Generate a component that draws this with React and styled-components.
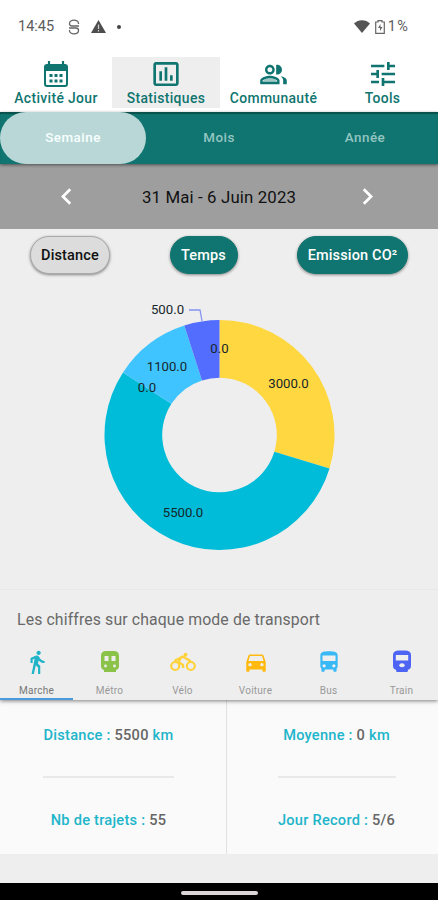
import React from "react";
import styled, { createGlobalStyle } from "styled-components";
import {
  MdInsertChartOutlined,
  MdTune,
  MdDirectionsWalk,
  MdDirectionsCar,
  MdDirectionsBus,
  MdChevronLeft,
  MdChevronRight,
} from "react-icons/md";

const GlobalStyle = createGlobalStyle`
  * { box-sizing: border-box; }
  body { margin: 0; background: #eeeeee; font-family: Roboto, sans-serif; }
  svg { display: block; }
`;

const Screen = styled.main`
  width: 438px;
  height: 900px;
  display: flex;
  flex-direction: column;
  overflow: hidden;
  background: #eeeeee;
`;

const StatusBar = styled.header`
  height: 57px;
  flex: none;
  padding: 0 30px 4px 18px;
  display: flex;
  align-items: center;
  justify-content: space-between;
  background: #fff;
  color: #5c5c5c;
  font-size: 14.5px;
`;

const StatusGroup = styled.div`
  display: flex;
  align-items: center;
  gap: ${(p) => p.$gap}px;
`;

const Clock = styled.span`
  width: 36px;
  white-space: nowrap;
  margin-right: 3px;
`;

const Battery = styled.span`
  letter-spacing: 1.2px;
  margin-left: -2px;
  margin-right: -1px;
`;

const Nav = styled.nav`
  height: 55px;
  flex: none;
  display: grid;
  grid-template-columns: 112px 108px 107px 111px;
  padding-bottom: 4px;
  background: #fff;
`;

const NavItem = styled.button`
  border: 0;
  padding: 1px 0 0;
  display: flex;
  flex-direction: column;
  align-items: center;
  background: ${(p) => (p.$active ? "#eeeeee" : "#fff")};
  color: #107570;
  font: 500 13.9px/16px Roboto, sans-serif;
  letter-spacing: 0.35px;
  white-space: nowrap;
`;

const NavIcon = styled.span`
  height: 32px;
  display: flex;
  align-items: center;
`;

const PeriodTabs = styled.div`
  height: 52px;
  flex: none;
  display: grid;
  grid-template-columns: repeat(3, 1fr);
  background: #107570;
  box-shadow: inset 0 2px 1px #0a504b, 0 1px 3px rgba(0, 0, 0, 0.5);
  z-index: 1;
`;

const PeriodTab = styled.button`
  border: 0;
  padding: 0 0 2px;
  border-radius: 26px;
  background: ${(p) => (p.$active ? "#b8d7d6" : "transparent")};
  color: ${(p) => (p.$active ? "#f8ffff" : "#94c5c2")};
  font: 500 13.4px Roboto, sans-serif;
  letter-spacing: 0.5px;
`;

const DateBar = styled.div`
  height: 65px;
  flex: none;
  display: grid;
  grid-template-columns: 132px 174px 122px;
  align-items: center;
  justify-items: center;
  background: #9e9e9e;
  color: #111;
  font-size: 16.8px;
  letter-spacing: 0.15px;
`;

const ArrowButton = styled.button`
  border: 0;
  padding: 0;
  background: none;
  color: #fff;
`;

const Filters = styled.div`
  height: 53px;
  flex: none;
  display: flex;
  align-items: center;
  justify-content: space-between;
  padding: 0 30px 2px;
`;

const FilterChip = styled.button`
  width: ${(p) => p.$width}px;
  height: 38px;
  padding: 2px 0 0;
  border: 1px solid ${(p) => (p.$selected ? "#aaa" : "#107570")};
  border-radius: 19px;
  background: ${(p) => (p.$selected ? "#dcdcdc" : "#107570")};
  color: ${(p) => (p.$selected ? "#111" : "#fff")};
  font: 500 14.5px Roboto, sans-serif;
  letter-spacing: 0.15px;
  white-space: nowrap;
  box-shadow: 0 1px 3px rgba(0, 0, 0, 0.45);
`;

const ChartArea = styled.section`
  height: 307px;
  flex: none;
`;

const ChartText = styled.text`
  font: 13.2px Roboto, sans-serif;
  fill: #16272b;
  text-anchor: middle;
`;

const Modes = styled.section`
  height: 111px;
  flex: none;
  display: flex;
  flex-direction: column;
  border-top: 1px solid #e7e7e7;
  box-shadow: 0 1px 4px rgba(0, 0, 0, 0.5);
  clip-path: inset(0 0 -8px 0);
  background: #eeeeee;
  z-index: 1;
`;

const ModesTitle = styled.h2`
  margin: 0;
  height: 56px;
  padding: 20px 17px 0;
  color: #696969;
  font: 400 15.8px/20px Roboto, sans-serif;
  letter-spacing: 0.13px;
  white-space: nowrap;
`;

const ModeTabs = styled.div`
  flex: 1;
  display: grid;
  grid-template-columns: repeat(6, 1fr);
`;

const ModeTab = styled.button`
  padding: 2px 0 0;
  border: 0;
  border-bottom: 2px solid ${(p) => (p.$active ? "#4a9add" : "transparent")};
  background: none;
  display: flex;
  flex-direction: column;
  align-items: center;
  color: ${(p) => (p.$active ? "#777" : "#999")};
  font: 400 10px/12px Roboto, sans-serif;
  letter-spacing: 0.25px;
`;

const ModeIcon = styled.span`
  height: 37px;
  padding-top: 1px;
  color: ${(p) => p.$color};
`;

const Stats = styled.section`
  height: 154px;
  flex: none;
  display: grid;
  grid-template-columns: 227px 211px;
  background: #fafafa;
`;

const StatColumn = styled.div`
  display: flex;
  flex-direction: column;
  align-items: center;
  padding: ${(p) => (p.$divided ? "25px 9px 0 0" : "25px 0 0 8px")};
  border-right: ${(p) => (p.$divided ? "1px solid #e1e1e1" : "0")};
`;

const Stat = styled.p`
  margin: 0;
  height: 20px;
  color: #21b5ca;
  font: 500 14.6px/20px Roboto, sans-serif;
  letter-spacing: 0.25px;
  white-space: nowrap;
`;

const StatValue = styled.span`
  color: #666;
`;

const Rule = styled.hr`
  width: ${(p) => p.$width}px;
  height: 2px;
  margin: 31px 0 32px;
  border: 0;
  background: #e9e9e9;
`;

const Spacer = styled.div`
  flex: 1;
`;

const SystemBar = styled.footer`
  height: 17px;
  flex: none;
  display: flex;
  justify-content: center;
  padding-top: 8px;
  background: #000;
`;

const HomeHandle = styled.div`
  width: 77px;
  height: 4px;
  border-radius: 2px;
  background: #ddd5d7;
`;

const CalendarIcon = () => (
  <svg width="26" height="28" viewBox="0 0 26 28" fill="none">
    <rect x="2" y="5" width="22" height="21" rx="2" stroke="#107570" strokeWidth="2" />
    <path d="M2 5h22v6H2z" fill="#107570" />
    <path d="M6 1v5M20 1v5" stroke="#107570" strokeWidth="2.2" />
    <path d="M6.500 15.500h3M11.500 15.500h3M16.500 15.500h3M6.500 21h3M11.500 21h3M16.500 21h3" stroke="#107570" strokeWidth="2.800" />
  </svg>
);

const PeopleIcon = () => (
  <svg width="29" height="29" viewBox="0 0 24 24" fill="currentColor">
    <path d="M18 13.400C19.200 14.300 20 15.500 20 17v3h3v-3c0-1.900-2.600-3.100-5-3.600zM15 12c2.210 0 4-1.790 4-4s-1.790-4-4-4c-.3 0-.6 0-.8.1V11.900c.2.100.5.100.8.100z" />
    <path fillRule="evenodd" d="M9 12c2.210 0 4-1.790 4-4s-1.790-4-4-4-4 1.790-4 4 1.790 4 4 4zm0-6c1.100 0 2 .9 2 2s-.9 2-2 2-2-.9-2-2 .9-2 2-2zM9 13c-2.670 0-8 1.340-8 4v3h16v-3c0-2.660-5.330-4-8-4zm6 5H3v-.99C3.200 16.290 6.300 15 9 15s5.800 1.290 6 2v1z" />
    <path d="M3 18C3.200 16.290 6.300 15 9 15s5.800 1.290 6 3z" opacity="0.4" />
  </svg>
);

const SyncIcon = () => (
  <svg width="12" height="16" viewBox="0 0 12 16" fill="none" stroke="#666" strokeWidth="1.300">
    <path d="M10.500 5V4.500C10.500 0 1.500 0 1.500 4.500C1.500 6.500 2.500 7 4 7H11M1 9H8C9.500 9 10.500 9.500 10.500 11.500C10.500 16 1.500 16 1.500 11.500V11" />
  </svg>
);

const WarningIcon = () => (
  <svg width="15" height="13" viewBox="0 0 15 13">
    <path d="M7.500 0L15 13H0z" fill="#4d4d4d" />
    <path d="M7.500 4.500V9M7.500 10v1.500" stroke="#ccc" strokeWidth="1.300" />
  </svg>
);

const DotIcon = () => (
  <svg width="4" height="4" viewBox="0 0 4 4">
    <circle cx="2" cy="2" r="2" fill="#444" />
  </svg>
);

const WifiIcon = () => (
  <svg width="16" height="13" viewBox="0 0 16 13">
    <path d="M0 3.500C4-1 12-1 16 3.500L8 13z" fill="#555" />
  </svg>
);

const BatteryIcon = () => (
  <svg width="10" height="14" viewBox="0 0 10 14" fill="none">
    <path d="M3 2V.7h4V2h2.300v11.300H.7V2z" stroke="#666" strokeWidth="1.200" />
    <path d="M5.500 4L3 8h2v3l2.500-4h-2z" fill="#666" />
  </svg>
);

const BikeIcon = () => (
  <svg width="26" height="26" viewBox="0 0 26 26" fill="none" stroke="currentColor" strokeWidth="2.200" strokeLinejoin="round">
    <circle cx="5.200" cy="17" r="4" />
    <circle cx="20.800" cy="17" r="4" />
    <path d="M4.500 11.800L11 8.500L8.500 13L13 16V19M11 8.500C13 6 15 10 18 10.500L21 13" strokeWidth="2.400" />
    <circle cx="15.500" cy="5.800" r="2" fill="currentColor" stroke="none" />
  </svg>
);

const MetroIcon = () => (
  <svg width="26" height="26" viewBox="0 0 26 26" fill="currentColor">
    <path fillRule="evenodd" d="M9 2h8q5 0 5 5v10q0 3-3 4v2H7v-2q-3-1-3-4V7q0-5 5-5zM7.500 7v5h4V7zm7 0v5h4V7z" />
    <circle cx="8.500" cy="17" r="1.400" fill="#eee" />
    <circle cx="17.500" cy="17" r="1.400" fill="#eee" />
  </svg>
);

const TrainIcon = () => (
  <svg width="26" height="26" viewBox="0 0 26 26" fill="currentColor">
    <path fillRule="evenodd" d="M10 1.500h6q6 0 6 4.500v11q0 3-3 3.800L18.500 23h-11L7 20.800Q4 20 4 17V6q0-4.500 6-4.500zM6.800 6v5.500h12.400V6z" />
    <ellipse cx="13" cy="16.300" rx="2.700" ry="2" fill="#eee" />
  </svg>
);

const CX = 219.5;
const CY = 153;
const OUTER = 115;
const INNER = 57.3;

const slices = [
  { value: 3000, color: "#ffd740" },
  { value: 5500, color: "#00bcd8" },
  { value: 1100, color: "#40c4ff" },
  { value: 500, color: "#536dfe" },
];

const labels = [
  { text: "500.0", x: 167.5, y: 32 },
  { text: "0.0", x: 219.5, y: 71 },
  { text: "3000.0", x: 288.5, y: 105.5 },
  { text: "1100.0", x: 167, y: 88.5 },
  { text: "0.0", x: 147, y: 110 },
  { text: "5500.0", x: 183, y: 235 },
];

const point = (radius, turn) => {
  const angle = turn * Math.PI * 2;
  return `${CX + radius * Math.sin(angle)} ${CY - radius * Math.cos(angle)}`;
};

const slicePath = (from, to) => {
  const large = to - from > 0.5 ? 1 : 0;
  return `M${point(OUTER, from)}A${OUTER} ${OUTER} 0 ${large} 1 ${point(OUTER, to)}L${point(INNER, to)}A${INNER} ${INNER} 0 ${large} 0 ${point(INNER, from)}Z`;
};

function DonutChart() {
  const total = slices.reduce((sum, s) => sum + s.value, 0);
  let start = 0;
  return (
    <svg width="438" height="307" viewBox="0 0 438 307">
      {slices.map((s) => {
        const from = start;
        start += s.value / total;
        return <path key={s.color} d={slicePath(from, start)} fill={s.color} />;
      })}
      <path d="M189 28H200L202 39" fill="none" stroke="#8495f2" strokeWidth="1.300" />
      {labels.map((l) => (
        <ChartText key={l.text + l.x} x={l.x} y={l.y}>{l.text}</ChartText>
      ))}
    </svg>
  );
}

const navItems = [
  { label: "Activité Jour", icon: <CalendarIcon /> },
  { label: "Statistiques", icon: <MdInsertChartOutlined size={32} />, active: true },
  { label: "Communauté", icon: <PeopleIcon /> },
  { label: "Tools", icon: <MdTune size={32} /> },
];

const modes = [
  { label: "Marche", Icon: MdDirectionsWalk, color: "#20b4c8", active: true },
  { label: "Métro", Icon: MetroIcon, color: "#8bc34a" },
  { label: "Vélo", Icon: BikeIcon, color: "#ffd23c" },
  { label: "Voiture", Icon: MdDirectionsCar, color: "#ffb90f" },
  { label: "Bus", Icon: MdDirectionsBus, color: "#38b9f6" },
  { label: "Train", Icon: TrainIcon, color: "#4d64f4" },
];

export default function App() {
  return (
    <>
      <GlobalStyle />
      <Screen>
        <StatusBar>
          <StatusGroup $gap={11}>
            <Clock>14:45</Clock>
            <SyncIcon />
            <WarningIcon />
            <DotIcon />
          </StatusGroup>
          <StatusGroup $gap={5}>
            <WifiIcon />
            <BatteryIcon />
            <Battery>1%</Battery>
          </StatusGroup>
        </StatusBar>
        <Nav>
          {navItems.map((n) => (
            <NavItem key={n.label} $active={n.active}>
              <NavIcon>{n.icon}</NavIcon>
              {n.label}
            </NavItem>
          ))}
        </Nav>
        <PeriodTabs>
          <PeriodTab $active>Semaine</PeriodTab>
          <PeriodTab>Mois</PeriodTab>
          <PeriodTab>Année</PeriodTab>
        </PeriodTabs>
        <DateBar>
          <ArrowButton aria-label="Semaine précédente"><MdChevronLeft size={33} /></ArrowButton>
          <span>31 Mai - 6 Juin 2023</span>
          <ArrowButton aria-label="Semaine suivante"><MdChevronRight size={33} /></ArrowButton>
        </DateBar>
        <Filters>
          <FilterChip $width={80} $selected>Distance</FilterChip>
          <FilterChip $width={68}>Temps</FilterChip>
          <FilterChip $width={111}>Emission CO²</FilterChip>
        </Filters>
        <ChartArea><DonutChart /></ChartArea>
        <Modes>
          <ModesTitle>Les chiffres sur chaque mode de transport</ModesTitle>
          <ModeTabs>
            {modes.map(({ label, Icon, color, active }) => (
              <ModeTab key={label} $active={active}>
                <ModeIcon $color={color}><Icon size={26} /></ModeIcon>
                {label}
              </ModeTab>
            ))}
          </ModeTabs>
        </Modes>
        <Stats>
          <StatColumn $divided>
            <Stat>Distance : <StatValue>5500</StatValue> km</Stat>
            <Rule $width={131} />
            <Stat>Nb de trajets : <StatValue>55</StatValue></Stat>
          </StatColumn>
          <StatColumn>
            <Stat>Moyenne : <StatValue>0</StatValue> km</Stat>
            <Rule $width={118} />
            <Stat>Jour Record : <StatValue>5/6</StatValue></Stat>
          </StatColumn>
        </Stats>
        <Spacer />
        <SystemBar><HomeHandle /></SystemBar>
      </Screen>
    </>
  );
}
